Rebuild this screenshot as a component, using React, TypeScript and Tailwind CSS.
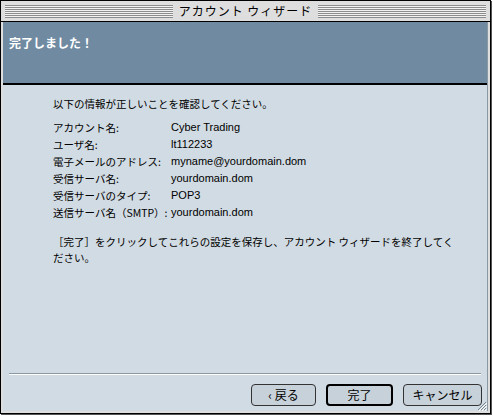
import React from "react";

const JP = "font-['Noto_Sans_CJK_JP','Liberation_Sans',sans-serif]";

const rows: [string, string][] = [
  ["アカウント名:", "Cyber Trading"],
  ["ユーザ名:", "lt112233"],
  ["電子メールのアドレス:", "myname@yourdomain.dom"],
  ["受信サーバ名:", "yourdomain.dom"],
  ["受信サーバのタイプ:", "POP3"],
  ["送信サーバ名（SMTP）:", "yourdomain.dom"],
];

function Stripes({ className }: { className: string }) {
  return (
    <div
      className={`h-[13px] bg-[repeating-linear-gradient(to_bottom,#8c8c8c_0px,#8c8c8c_1px,#f2f2f2_1px,#f2f2f2_2px)] ${className}`}
    />
  );
}

function MacButton({ label, width, primary }: { label: string; width: string; primary?: boolean }) {
  return (
    <button
      className={`h-[22px] rounded-[4px] bg-[#c6d1d9] text-[12px] text-black ${width} ${
        primary ? "border-2 border-black" : "border border-[#333]"
      }`}
    >
      {label}
    </button>
  );
}

export default function App() {
  return (
    <div className={`w-[493px] h-[416px] bg-white ${JP}`}>
      <div className="w-[491px] h-[414px] border border-black bg-[#dedede] flex flex-col shadow-[1px_1px_0_#555]">
        {/* title bar */}
        <div className="h-[20px] flex items-center px-[4px] gap-[6px]">
          <Stripes className="flex-1" />
          <span className="text-[12px] leading-none text-black tracking-[1px]">アカウント ウィザード</span>
          <Stripes className="flex-1" />
        </div>
        <div className="h-[1px] bg-black" />
        <div className="flex-1 flex flex-col mx-[2px] mb-[2px] border-r border-[#8a98a4]">
          {/* header */}
          <div className="h-[63px] shrink-0 bg-[#6f8aa1] px-[6px] pt-[15px] border-b-2 border-black">
            <div className="text-[12px] font-bold text-white leading-none">完了しました！</div>
          </div>
          {/* body */}
          <div className="relative flex-1 bg-[#d1dbe3] flex flex-col text-[10.5px] text-black">
            <div className="pl-[50px] pt-[10px]">
              <div className="leading-[17px]">以下の情報が正しいことを確認してください。</div>
              <div className="mt-[7px] flex flex-col">
                {rows.map(([k, v]) => (
                  <div key={k} className="flex h-[17px] items-center">
                    <span className="w-[118px] whitespace-nowrap">{k}</span>
                    <span className="font-['Liberation_Sans',sans-serif] text-[11px]">{v}</span>
                  </div>
                ))}
              </div>
              <div className="mt-[13px] leading-[16px] whitespace-nowrap">
                ［完了］をクリックしてこれらの設定を保存し、アカウント ウィザードを終了してく
                <br />
                ださい。
              </div>
            </div>
            <div className="flex-1" />
            <div className="mx-[6px] h-[2px] border-t border-[#8c99a3] bg-white" />
            <div className="flex justify-end gap-[10px] pr-[5px] pt-[9px] pb-[5px]">
              <MacButton label="‹ 戻る" width="w-[65px]" />
              <MacButton label="完了" width="w-[67px]" primary />
              <MacButton label="キャンセル" width="w-[79px]" />
            </div>
            <svg className="absolute right-0 bottom-0" width="12" height="12" viewBox="0 0 12 12">
              <path d="M11 3 L3 11 M11 6 L6 11 M11 9 L9 11" stroke="#7a8790" strokeWidth="1" />
              <path d="M12 4 L4 12 M12 7 L7 12 M12 10 L10 12" stroke="#ffffff" strokeWidth="1" />
            </svg>
          </div>
        </div>
      </div>
    </div>
  );
}
